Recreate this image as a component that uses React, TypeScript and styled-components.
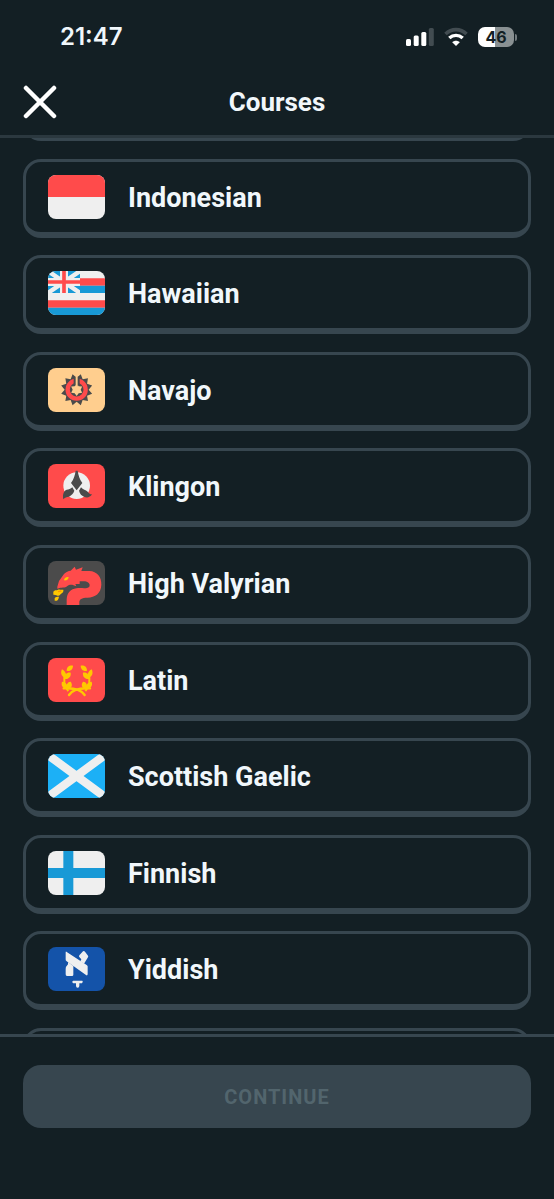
import React, { useLayoutEffect, useRef } from "react";
import styled, { createGlobalStyle } from "styled-components";

const color = {
  page: "#131f24",
  line: "#37464f",
  headerLine: "#2b383f",
  text: "#f1f7fb",
  muted: "#52656d",
  red: "#ff4b4b",
  snow: "#efefef",
  blue: "#1899d6",
  sky: "#1cb0f6",
  coal: "#4b4b4b",
  gold: "#ffc800",
  sand: "#ffce8e",
};

const GlobalStyle = createGlobalStyle`
  * { box-sizing: border-box; }
  body {
    margin: 0;
    background: ${color.page};
    color: ${color.text};
    font-family: Roboto, "Liberation Sans", sans-serif;
  }
`;

const Screen = styled.div`
  display: flex;
  flex-direction: column;
  height: 100vh;
`;

const StatusBar = styled.div`
  display: flex;
  align-items: center;
  justify-content: space-between;
  height: 72px;
  padding: 2px 37px 0 60px;
  font-family: Inter, "Liberation Sans", sans-serif;
`;

const Clock = styled.time`
  font-size: 24px;
  font-weight: 600;
  line-height: 28px;
`;

const StatusIcons = styled.div`
  display: flex;
  align-items: center;
  gap: 10px;
`;

const Battery = styled.div`
  display: flex;
  align-items: center;
  gap: 1px;
`;

const BatteryBody = styled.div`
  width: 36px;
  height: 20px;
  border-radius: 7px;
  background: linear-gradient(90deg, #ffffff 46%, #899092 46%);
  color: ${color.page};
  font-size: 16px;
  font-weight: 700;
  line-height: 20px;
  text-align: center;
`;

const BatteryTip = styled.div`
  width: 2px;
  height: 7px;
  border-radius: 0 2px 2px 0;
  background: #737b7f;
`;

const Header = styled.header`
  display: grid;
  grid-template-columns: 34px 1fr 34px;
  align-items: center;
  height: 66px;
  padding: 0 23px 3px;
  border-bottom: 3px solid ${color.headerLine};
`;

const CloseButton = styled.button`
  display: flex;
  padding: 0;
  border: 0;
  background: none;
  cursor: pointer;
`;

const Title = styled.h1`
  margin: 0;
  font-size: 26px;
  font-weight: 700;
  line-height: 32px;
  text-align: center;
`;

const Scroller = styled.main`
  flex: 1;
  min-height: 0;
  overflow-y: auto;
  scrollbar-width: none;
`;

const CourseList = styled.ul`
  display: flex;
  flex-direction: column;
  justify-content: space-between;
  gap: 16px;
  min-height: calc(100% + 149px);
  margin: 0;
  padding: 0 23px;
  list-style: none;
`;

const CourseItem = styled.li`
  display: flex;
`;

const CourseCard = styled.button`
  display: flex;
  flex: 1;
  align-items: center;
  gap: 23px;
  height: 79px;
  padding: 0 22px;
  border: 3px solid ${color.line};
  border-bottom-width: 6px;
  border-radius: 18px;
  background: none;
  color: inherit;
  font-family: inherit;
  text-align: left;
  cursor: pointer;
`;

const CourseName = styled.span`
  padding-top: 2px;
  font-size: 27px;
  font-weight: 700;
  line-height: 32px;
`;

const Flag = styled.svg`
  flex: none;
  width: 57px;
  height: 44px;
  border-radius: 8px;
`;

const Footer = styled.footer`
  display: flex;
  padding: 28px 23px 71px;
  border-top: 3px solid ${color.line};
`;

const ContinueButton = styled.button`
  flex: 1;
  height: 63px;
  padding: 0;
  border: 0;
  border-radius: 18px;
  background: ${color.line};
  color: ${color.muted};
  font-family: inherit;
  font-size: 20px;
  font-weight: 700;
  letter-spacing: 1px;
`;

const Field = ({ fill }: { fill: string }) => <rect width="171" height="132" fill={fill} />;

const polar = (cx: number, cy: number, r: number, deg: number) => {
  const a = (deg * Math.PI) / 180;
  return `${(cx + r * Math.sin(a)).toFixed(1)},${(cy - r * Math.cos(a)).toFixed(1)}`;
};

const star = (points: number, outer: number, inner: number, start = 0) =>
  Array.from({ length: points * 2 }, (_, i) =>
    polar(86, 65, i % 2 ? inner : outer, start + (i * 180) / points)
  ).join(" ");

const Indonesian = () => (
  <>
    <Field fill={color.snow} />
    <rect width="171" height="66" fill={color.red} />
  </>
);

const Hawaiian = () => (
  <>
    <Field fill={color.snow} />
    <path d="M0 22h171v22H0zM0 88h171v22H0z" fill={color.red} />
    <path d="M0 44h171v22H0zM0 110h171v22H0z" fill={color.blue} />
    <svg width="96" height="66" viewBox="0 0 96 66">
      <rect width="96" height="66" fill={color.blue} />
      <path d="M0 0L96 66M96 0L0 66" stroke={color.snow} strokeWidth="13" />
      <path d="M48 0V66M0 33H96" stroke={color.snow} strokeWidth="24" />
      <path d="M48 0V66M0 33H96" stroke={color.red} strokeWidth="11" />
    </svg>
  </>
);

const Navajo = () => (
  <>
    <Field fill={color.sand} />
    <polygon points={star(12, 48, 36, 15)} fill={color.coal} />
    <circle cx="86" cy="65" r="27" fill="none" stroke={color.red} strokeWidth="13" />
    <polygon points={star(6, 19, 12, 0)} fill={color.sand} />
    <path d="M77 26h18v20l-9 10l-9-10z" fill={color.coal} />
    <path d="M86 22V60" stroke={color.sand} strokeWidth="6" />
  </>
);

const Klingon = () => (
  <>
    <Field fill={color.red} />
    <circle cx="86" cy="65" r="40" fill={color.snow} />
    <path d="M83 20h6c2 14 6 25 14 37L86 79L69 57c8-12 12-23 14-37z" fill={color.coal} />
    <path d="M73 70l6 10c-3 9-8 13-16 18c-7 1-13 3-17 8c-3-14 1-26 10-29c6 0 12-2 17-7z" fill={color.coal} />
    <path d="M99 70l-6 10c3 10 8 15 15 18c8 4 18 3 24-7c-7 0-10-4-13-8c-6-5-14-6-20-13z" fill={color.coal} />
  </>
);

const Valyrian = () => (
  <>
    <Field fill={color.coal} />
    <path
      d="M28 77L33 60L48 39C54 32 61 30 68 29L80 17L84 26L104 19L100 30H124C147 31 161 48 160 71C159 97 142 109 118 110C101 110 94 115 94 124V132H56V115C57 95 69 84 85 82C99 79 116 85 124 77C128 69 121 63 111 61H95V69H82L85 76C73 69 64 70 58 75C51 82 40 78 28 83z"
      fill={color.red}
    />
    <path d="M48 58C48 51 54 47 62 48C61 55 57 59 48 58z" fill={color.gold} />
    <path d="M16 92C20 86 25 89 29 87C34 83 38 88 46 86C48 96 38 96 36 102C29 108 26 100 16 101z" fill={color.gold} />
    <path d="M20 112C24 106 27 108 33 107C32 117 26 121 20 119z" fill={color.gold} />
    <path d="M30 92l10-2" stroke="#ff9600" strokeWidth="4" />
  </>
);

const Branch = () => (
  <g fill={color.gold}>
    <path d="M61 99C48 84 46 64 52 46" fill="none" stroke={color.gold} strokeWidth="6" />
    <path d="M56 38C56 27 64 21 75 23C75 34 67 41 56 38z" />
    <path d="M51 60C39 55 37 44 42 34C52 39 56 48 51 60z" />
    <path d="M49 63C49 49 57 42 68 44C70 56 62 64 49 63z" />
    <path d="M58 92C45 92 38 83 42 71C54 72 60 80 58 92z" />
    <path d="M57 92C53 79 60 70 68 71C76 82 70 92 57 92z" />
  </g>
);

const Latin = () => (
  <>
    <Field fill={color.red} />
    <Branch />
    <g transform="translate(173 0) scale(-1 1)">
      <Branch />
    </g>
    <path
      d="M47 91C80 89 101 97 110 111M126 91C93 89 72 97 63 111"
      fill="none"
      stroke={color.gold}
      strokeWidth="7"
      strokeLinecap="round"
    />
  </>
);

const Scottish = () => (
  <>
    <Field fill={color.sky} />
    <path d="M0 3L171 129M171 3L0 129" stroke={color.snow} strokeWidth="25" />
  </>
);

const Finnish = () => (
  <>
    <Field fill={color.snow} />
    <path d="M61 0V132M0 66H171" stroke={color.blue} strokeWidth="30" />
  </>
);

const Yiddish = () => (
  <>
    <Field fill="#1453a9" />
    <g fill={color.snow}>
      <path d="M55 14L117 55Q120 58 119 61V82Q118 87 114 84L56 43Q52 40 53 36V17Q53 13 55 14z" />
      <path d="M94 25L105 13Q108 11 111 14L120 26Q122 29 119 32L108 50L97 43L100 37L94 30Q92 28 94 25z" />
      <path d="M60 45L76 57V83Q76 87 72 87H57Q53 87 53 82V66Q53 59 60 52z" />
      <path d="M76 101H102Q105 101 104 105L102 109H94V116Q94 122 89 122Q84 122 84 116V109H76Q73 108 73 105Q73 101 76 101z" />
    </g>
  </>
);

const courses = [
  { name: "Indonesian", Art: Indonesian },
  { name: "Hawaiian", Art: Hawaiian },
  { name: "Navajo", Art: Navajo },
  { name: "Klingon", Art: Klingon },
  { name: "High Valyrian", Art: Valyrian },
  { name: "Latin", Art: Latin },
  { name: "Scottish Gaelic", Art: Scottish },
  { name: "Finnish", Art: Finnish },
  { name: "Yiddish", Art: Yiddish },
];

const EmptyCourse = () => (
  <CourseItem aria-hidden="true">
    <CourseCard type="button" tabIndex={-1} />
  </CourseItem>
);

const SignalIcon = () => (
  <svg width="28" height="20" viewBox="0 0 28 20" fill="#ffffff" aria-hidden="true">
    <rect x="0" y="12" width="5" height="7" rx="1.5" />
    <rect x="7.7" y="8.5" width="5" height="10.5" rx="1.5" />
    <rect x="15.3" y="5" width="5" height="14" rx="1.5" />
    <rect x="22.8" y="1" width="5" height="18" rx="1.5" fill="#424c51" />
  </svg>
);

const WifiIcon = () => (
  <svg width="24" height="20" viewBox="0 0 24 20" fill="none" aria-hidden="true">
    <path d="M1.5 7C7.5 1.2 16.5 1.2 22.5 7" stroke="#424c51" strokeWidth="3.6" />
    <path d="M5.3 11.1C9.2 7.5 14.8 7.5 18.7 11.1" stroke="#ffffff" strokeWidth="3.4" />
    <path d="M12 19L8.2 15.2C10.3 13.2 13.7 13.2 15.8 15.2z" fill="#ffffff" />
  </svg>
);

export default function App() {
  const scroller = useRef<HTMLElement>(null);

  // Opens part-way down the list, just past the preceding course.
  useLayoutEffect(() => {
    if (scroller.current) scroller.current.scrollTop = 76;
  }, []);

  return (
    <Screen>
      <GlobalStyle />
      <StatusBar>
        <Clock>21:47</Clock>
        <StatusIcons>
          <SignalIcon />
          <WifiIcon />
          <Battery>
            <BatteryBody>46</BatteryBody>
            <BatteryTip />
          </Battery>
        </StatusIcons>
      </StatusBar>
      <Header>
        <CloseButton type="button" aria-label="Close">
          <svg width="34" height="34" viewBox="0 0 34 34" aria-hidden="true">
            <path d="M3 3L31 31M31 3L3 31" stroke="#ffffff" strokeWidth="4.5" strokeLinecap="round" />
          </svg>
        </CloseButton>
        <Title>Courses</Title>
      </Header>
      <Scroller ref={scroller}>
        <CourseList>
          <EmptyCourse />
          {courses.map(({ name, Art }) => (
            <CourseItem key={name}>
              <CourseCard type="button">
                <Flag viewBox="0 0 171 132" aria-hidden="true">
                  <Art />
                </Flag>
                <CourseName>{name}</CourseName>
              </CourseCard>
            </CourseItem>
          ))}
          <EmptyCourse />
        </CourseList>
      </Scroller>
      <Footer>
        <ContinueButton type="button" disabled>
          CONTINUE
        </ContinueButton>
      </Footer>
    </Screen>
  );
}
